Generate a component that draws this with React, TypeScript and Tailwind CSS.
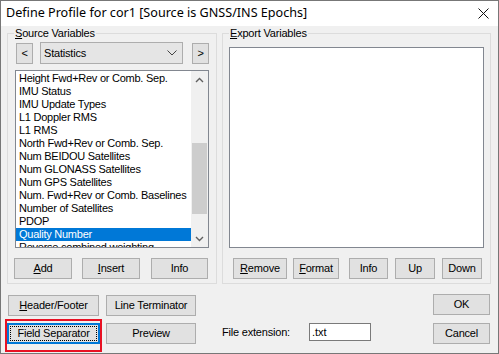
import React from 'react';

const sourceItems = [
  'Height Fwd+Rev or Comb. Sep.',
  'IMU Status',
  'IMU Update Types',
  'L1 Doppler RMS',
  'L1 RMS',
  'North Fwd+Rev or Comb. Sep.',
  'Num BEIDOU Satellites',
  'Num GLONASS Satellites',
  'Num GPS Satellites',
  'Num. Fwd+Rev or Comb. Baselines',
  'Number of Satellites',
  'PDOP',
  'Quality Number',
  'Reverse combined weighting',
];

const Btn = ({ children, className = '' }: { children: React.ReactNode; className?: string }) => (
  <button
    className={`h-[21px] shrink-0 bg-[#e1e1e1] border border-[#adadad] text-[11px] leading-[13px] tracking-[-0.2px] font-normal text-black flex items-center justify-center ${className}`}
  >
    {children}
  </button>
);

const Chevron = ({ up }: { up?: boolean }) => (
  <svg width="9" height="6" viewBox="0 0 9 6">
    <path
      d={up ? 'M1 5 L4.5 1.5 L8 5' : 'M1 1 L4.5 4.5 L8 1'}
      fill="none"
      stroke="#606060"
      strokeWidth="1.4"
    />
  </svg>
);

export default function App() {
  return (
    <div className="relative w-[499px] h-[354px] bg-[#f0f0f0] border border-[#777777] font-['Liberation_Sans',Arial,sans-serif] text-black overflow-hidden">
      {/* title bar */}
      <div className="h-[25px] bg-white flex items-center pl-[5px]">
        <span className="font-['Noto_Sans',sans-serif] text-[12.6px] leading-none">
          Define Profile for cor1 [Source is GNSS/INS Epochs]
        </span>
        <div className="flex-1" />
        <svg width="11" height="11" viewBox="0 0 11 11" className="mr-[9px]">
          <path d="M0.5 0.5 L10.5 10.5 M10.5 0.5 L0.5 10.5" stroke="#111" strokeWidth="1" />
        </svg>
      </div>

      <div className="flex mt-[1px]">
        {/* Source Variables */}
        <fieldset className="ml-[6px] w-[210px] h-[257px] border border-[#dcdcdc]">
          <legend className="ml-[6px] px-[1px] text-[11px] leading-[13px] tracking-[-0.2px]">
            <u>S</u>ource Variables
          </legend>
          <div className="mt-[2px] h-[22px] flex items-center">
            <Btn className="ml-[8px] w-[17px] h-[17px]">&lt;</Btn>
            <div className="ml-[7px] w-[143px] h-[22px] bg-[#e5e5e5] border border-[#adadad] flex items-center pl-[3px] pr-[5px] text-[11px] tracking-[-0.2px]">
              <span>Statistics</span>
              <div className="flex-1" />
              <svg width="10" height="6" viewBox="0 0 10 6">
                <path d="M0.5 0.5 L5 5 L9.5 0.5" fill="none" stroke="#444" strokeWidth="1" />
              </svg>
            </div>
            <Btn className="ml-[9px] w-[17px] h-[17px]">&gt;</Btn>
          </div>
          <div className="ml-[7px] mt-[6px] w-[194px] h-[178px] bg-white border border-[#828790] flex overflow-hidden">
            <div className="flex-1 pt-[1px] overflow-hidden">
              {sourceItems.map((item) => (
                <div
                  key={item}
                  className={`h-[13px] pl-[3px] text-[11px] leading-[13px] tracking-[-0.25px] whitespace-nowrap ${
                    item === 'Quality Number' ? 'bg-[#0078d7] text-white' : ''
                  }`}
                >
                  {item}
                </div>
              ))}
            </div>
            <div className="w-[17px] bg-[#f0f0f0] flex flex-col">
              <div className="h-[17px] flex items-center justify-center">
                <Chevron up />
              </div>
              <div className="flex-1">
                <div className="mt-[55px] mx-[1px] h-[71px] bg-[#cdcdcd]" />
              </div>
              <div className="h-[17px] flex items-center justify-center">
                <Chevron />
              </div>
            </div>
          </div>
          <div className="mt-[10px] flex">
            <Btn className="ml-[6px] w-[58px]">
              <u>A</u>dd
            </Btn>
            <Btn className="ml-[10px] w-[58px]">
              <u>I</u>nsert
            </Btn>
            <Btn className="ml-[11px] w-[57px]">Info</Btn>
          </div>
        </fieldset>

        {/* Export Variables */}
        <fieldset className="ml-[5px] w-[269px] h-[257px] border border-[#dcdcdc]">
          <legend className="ml-[6px] px-[1px] text-[11px] leading-[13px] tracking-[-0.2px]">
            <u>E</u>xport Variables
          </legend>
          <div className="ml-[6px] mt-[7px] w-[255px] h-[201px] bg-white border border-[#828790]" />
          <div className="mt-[10px] flex">
            <Btn className="ml-[10px] w-[54px]">
              <u>R</u>emove
            </Btn>
            <Btn className="ml-[6px] w-[46px]">
              <u>F</u>ormat
            </Btn>
            <Btn className="ml-[10px] w-[39px]">Info</Btn>
            <Btn className="ml-[7px] w-[40px]">Up</Btn>
            <Btn className="ml-[7px] w-[40px]">Down</Btn>
          </div>
        </fieldset>
      </div>

      {/* lower rows */}
      <div className="mt-[10px] flex items-start">
        <Btn className="ml-[7px] mt-[1px] w-[91px]">
          <u>H</u>eader/Footer
        </Btn>
        <Btn className="ml-[7px] mt-[1px] w-[90px]">Line Terminator</Btn>
        <div className="flex-1" />
        <Btn className="mr-[8px] w-[57px]">OK</Btn>
      </div>
      <div className="mt-[7px] flex items-start">
        <button className="ml-[6px] w-[93px] h-[21px] bg-[#e1e1e1] border-2 border-[#0078d7] p-0">
          <span className="flex items-center justify-center m-[1px] h-[15px] border border-dotted border-black text-[11px] leading-[13px] tracking-[-0.2px]">
            Field Separator
          </span>
        </button>
        <Btn className="ml-[6px] w-[90px]">Preview</Btn>
        <span className="ml-[26px] w-[87px] h-[18px] flex items-center text-[11px] tracking-[-0.2px]">File extension:</span>
        <div className="w-[62px] h-[18px] bg-white border border-[#7a7a7a] flex items-center pl-[2px] text-[11px]">
          .txt
        </div>
        <div className="flex-1" />
        <Btn className="mr-[8px] w-[57px]">Cancel</Btn>
      </div>

      {/* red annotation box */}
      <div className="absolute left-[4px] top-[318px] w-[97px] h-[33px] border-2 border-[#e81123] pointer-events-none" />
    </div>
  );
}
